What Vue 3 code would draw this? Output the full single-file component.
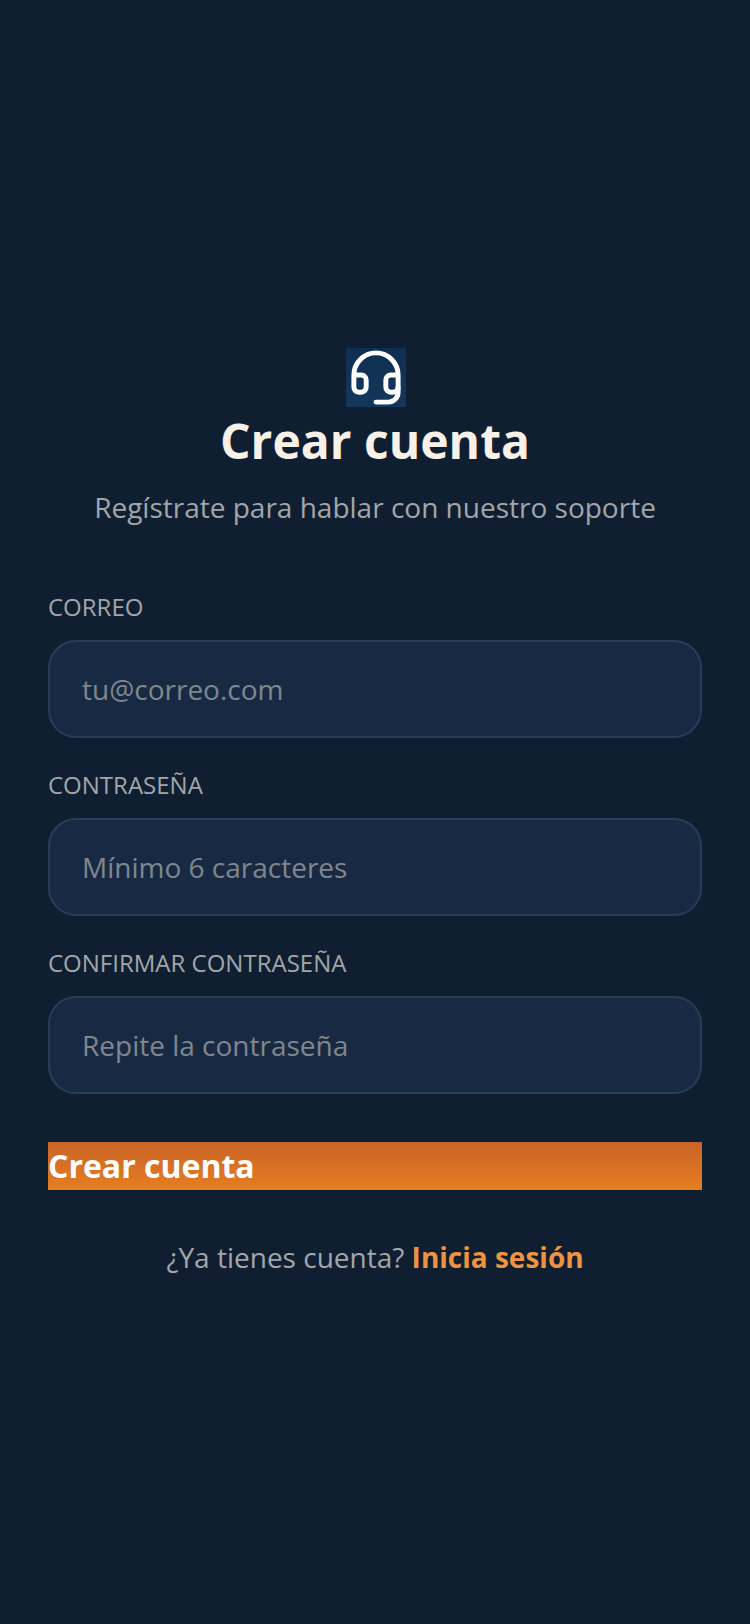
<script setup>
const fields = [
  { label: 'CORREO', type: 'email', placeholder: 'tu@correo.com' },
  { label: 'CONTRASEÑA', type: 'password', placeholder: 'Mínimo 6 caracteres' },
  { label: 'CONFIRMAR CONTRASEÑA', type: 'password', placeholder: 'Repite la contraseña' }
]
</script>

<template>
  <div class="page">
    <header class="head">
      <svg class="logo" viewBox="0 0 24 24" fill="none" stroke="#fff" stroke-width="2" stroke-linecap="round" stroke-linejoin="round">
        <path d="M3 11h3a2 2 0 0 1 2 2v3a2 2 0 0 1-2 2H5a2 2 0 0 1-2-2v-5Zm0 0a9 9 0 1 1 18 0m0 0v5a2 2 0 0 1-2 2h-1a2 2 0 0 1-2-2v-3a2 2 0 0 1 2-2h3Z" />
        <path d="M21 16v2a4 4 0 0 1-4 4h-5" />
      </svg>
      <h1>Crear cuenta</h1>
      <p>Regístrate para hablar con nuestro soporte</p>
    </header>

    <form class="form" @submit.prevent>
      <div v-for="field in fields" :key="field.label" class="field">
        <label>{{ field.label }}</label>
        <input :type="field.type" :placeholder="field.placeholder" />
      </div>
      <button type="submit">Crear cuenta</button>
    </form>

    <p class="footer">¿Ya tienes cuenta? <a href="#">Inicia sesión</a></p>
  </div>
</template>

<style>
body {
  background: #0f1f31;
}
</style>

<style scoped>
.page {
  min-height: 1624px;
  padding: 0 48px;
  box-sizing: border-box;
  display: flex;
  flex-direction: column;
  justify-content: center;
  font-family: "Open Sans", sans-serif;
  background: #0f1f31;
}

.head {
  display: flex;
  flex-direction: column;
  align-items: center;
  margin-bottom: 65px;
}

.logo {
  width: 60px;
  height: 59px;
  margin: 0 0 1px 2px;
  background: linear-gradient(180deg, #0f2f52, #13375b);
}

h1 {
  margin: 0;
  color: #f8f1e8;
  font-size: 48px;
  font-weight: 700;
  line-height: 66px;
}

.head p {
  margin: 14px 0 0;
  color: #a3a6a9;
  font-size: 28px;
}

.field {
  display: flex;
  flex-direction: column;
  gap: 17px;
  margin-bottom: 31px;
}

label {
  color: #a3a6a9;
  font-size: 24px;
  line-height: 32px;
}

input {
  height: 98px;
  padding: 0 32px;
  box-sizing: border-box;
  color: #f8f1e8;
  font-family: inherit;
  font-size: 28px;
  background: #182a43;
  border: 2px solid #2a3d58;
  border-radius: 28px;
  outline: none;
}

input::placeholder {
  color: #80868e;
  opacity: 1;
}

button {
  display: block;
  width: 100%;
  height: 48px;
  margin-top: 48px;
  padding: 0;
  color: #fff;
  font-family: inherit;
  font-size: 32px;
  font-weight: 700;
  line-height: 48px;
  text-align: left;
  background: linear-gradient(180deg, #c96428, #e67e22);
  border: none;
}

.footer {
  margin: 48px 0 0;
  color: #a3a6a9;
  font-size: 28px;
  text-align: center;
}

.footer a {
  color: #ee9340;
  font-weight: 700;
  text-decoration: none;
}
</style>
